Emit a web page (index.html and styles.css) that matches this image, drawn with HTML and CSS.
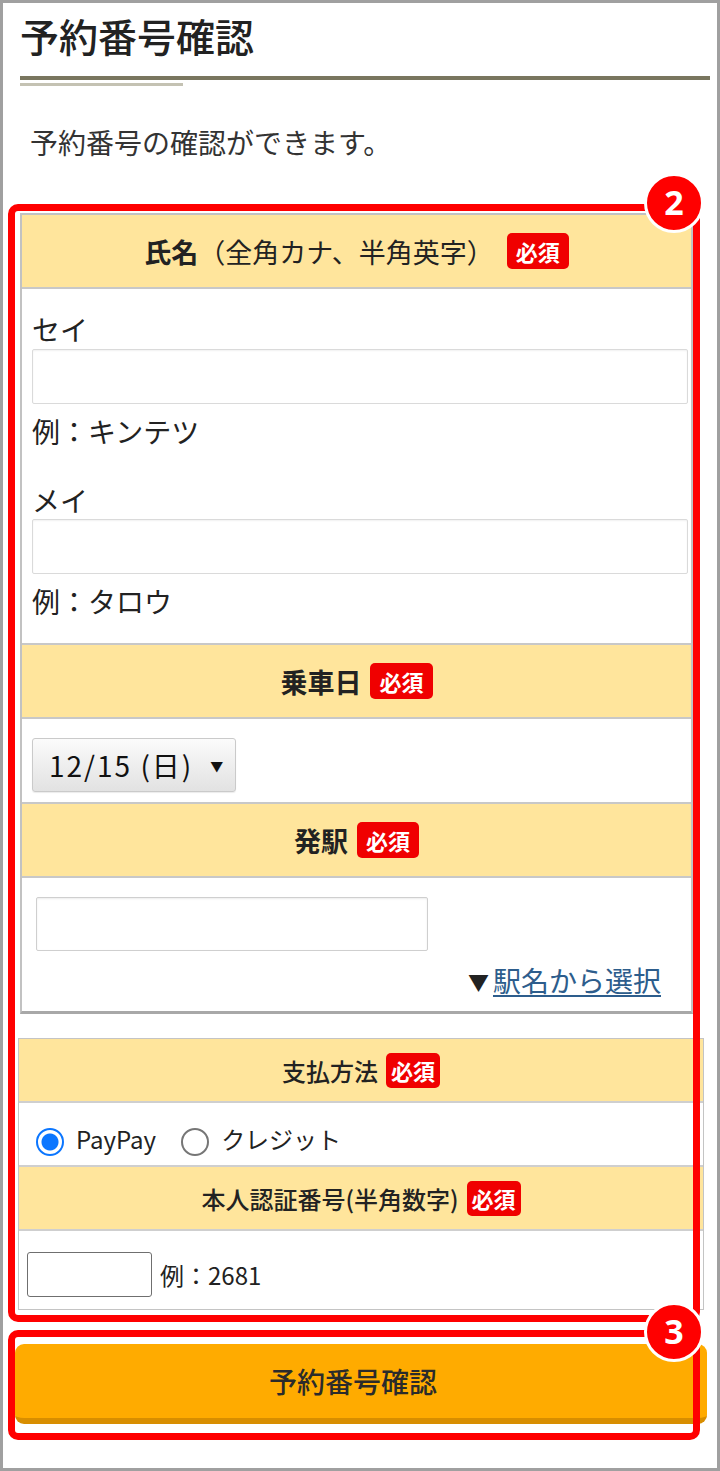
FILE: index.html
```html
<!DOCTYPE html>
<html lang="ja">
<head>
<meta charset="utf-8">
<title>予約番号確認</title>
<link rel="stylesheet" href="styles.css">
</head>
<body>
<div class="frame">
  <div class="page-head">
    <h1 class="page-title">予約番号確認</h1>
    <div class="title-rule"></div>
  </div>
  <p class="lead">予約番号の確認ができます。</p>

  <section class="form-main">
    <div class="form-head first"><strong>氏名</strong><span class="note">（全角カナ、半角英字）</span><span class="req">必須</span></div>
    <div class="form-body name-body">
      <label class="field-label">セイ</label>
      <input class="text-input" type="text">
      <p class="example">例：キンテツ</p>
      <label class="field-label gap">メイ</label>
      <input class="text-input tight" type="text">
      <p class="example">例：タロウ</p>
    </div>
    <div class="form-head"><strong>乗車日</strong><span class="req">必須</span></div>
    <div class="form-body date-body">
      <div class="select-box"><span class="select-text">12/15 (日)</span><span class="caret">▼</span></div>
    </div>
    <div class="form-head"><strong>発駅</strong><span class="req">必須</span></div>
    <div class="form-body station-body">
      <input class="station-input" type="text">
      <div class="station-link"><span class="tri">▼</span><a href="#">駅名から選択</a></div>
    </div>
  </section>

  <section class="form-sub">
    <div class="sub-head">支払方法<span class="req req-sm">必須</span></div>
    <div class="radio-row">
      <label class="radio"><input type="radio" name="pay" checked><span>PayPay</span></label>
      <label class="radio"><input type="radio" name="pay"><span>クレジット</span></label>
    </div>
    <div class="sub-head">本人認証番号(半角数字)<span class="req req-sm">必須</span></div>
    <div class="pin-row">
      <input class="pin-input" type="text">
      <span class="pin-example">例：2681</span>
    </div>
  </section>

  <button class="submit" type="button">予約番号確認</button>

  <div class="mark mark-form"></div>
  <div class="mark mark-submit"></div>
  <span class="step step-2">2</span>
  <span class="step step-3">3</span>
</div>
</body>
</html>
```

FILE: styles.css
```css
html, body {
  margin: 0;
  padding: 0;
  background: #fff;
}
body {
  font-family: "Noto Sans CJK JP", "Noto Sans", sans-serif;
  color: #222;
}
.frame {
  position: relative;
  width: 720px;
  height: 1471px;
  box-sizing: border-box;
  border: 3px solid #a0a0a0;
  background: #fff;
  padding-top: 13px;
  overflow: hidden;
}

/* heading */
.page-head {
  margin: 0 7px 0 17px;
}
.page-title {
  margin: 0;
  font-size: 39px;
  line-height: 39px;
  font-weight: 500;
  color: #222;
  padding-bottom: 21px;
  border-bottom: 4px solid #79765f;
}
.title-rule {
  width: 163px;
  height: 3px;
  margin-top: 3px;
  background: #c4c2b3;
}
.lead {
  margin: 42px 0 0 27px;
  font-size: 28px;
  line-height: 28px;
  color: #333;
}

/* main form box */
.form-main {
  margin: 57px 24px 0 17px;
  border: 2px solid #c2c2c2;
  border-bottom-width: 3px;
  border-bottom-color: #a8a8a8;
}
.form-head {
  display: flex;
  justify-content: center;
  align-items: center;
  box-sizing: border-box;
  height: 76px;
  background: #ffe59c;
  border-top: 2px solid #c8c8c8;
  border-bottom: 2px solid #c8c8c8;
  font-size: 27px;
  color: #222;
}
.form-head.first {
  height: 74px;
  border-top: 0;
}
.form-head strong {
  font-weight: 700;
}
.form-head .note {
  font-weight: 400;
}
.req {
  display: inline-block;
  height: 36px;
  line-height: 36px;
  padding: 0 9px;
  margin-left: 9px;
  border-radius: 5px;
  background: #f00000;
  color: #fff;
  font-size: 22px;
  font-weight: 700;
}
.form-head .note + .req {
  margin-left: 13px;
}

.form-body {
  padding: 0 3px 0 10px;
  background: #fff;
}
.name-body {
  padding-top: 23px;
  padding-bottom: 25px;
}
.field-label,
.example {
  display: block;
  margin: 0;
  font-size: 28px;
  line-height: 34px;
  color: #222;
}
.field-label {
  margin-bottom: 3px;
}
.field-label.gap {
  margin-top: 35px;
  margin-bottom: 2px;
}
.example {
  margin-top: 10px;
}
.text-input {
  display: block;
  width: 100%;
  height: 55px;
  box-sizing: border-box;
  border: 1px solid #dadada;
  border-radius: 2px;
  box-shadow: inset 0 1px 2px rgba(0, 0, 0, 0.06);
  background: #fff;
  margin: 0;
}

.date-body {
  padding-top: 19px;
  padding-bottom: 10px;
}
.select-box {
  display: flex;
  align-items: center;
  width: 204px;
  height: 54px;
  box-sizing: border-box;
  padding-left: 16px;
  border: 1px solid #cacaca;
  border-radius: 3px;
  background: linear-gradient(#fbfbfb, #e2e2e2);
  box-shadow: 0 1px 1px rgba(0, 0, 0, 0.08);
}
.select-text {
  font-size: 28px;
  letter-spacing: 2px;
  color: #111;
}
.caret {
  margin-left: 17px;
  font-size: 13px;
  color: #111;
}

.station-body {
  padding-top: 19px;
  padding-bottom: 13px;
}
.station-input {
  display: block;
  width: 392px;
  height: 54px;
  box-sizing: border-box;
  margin: 0 0 0 4px;
  border: 1px solid #cfcfcf;
  border-radius: 2px;
  box-shadow: inset 0 1px 2px rgba(0, 0, 0, 0.08);
  background: #fff;
}
.station-link {
  margin-top: 12px;
  padding-right: 27px;
  text-align: right;
  font-size: 28px;
  line-height: 34px;
}
.station-link .tri {
  font-size: 21px;
  color: #222;
  margin-right: 4px;
  vertical-align: 2px;
}
.station-link a {
  color: #2d5d8c;
  text-decoration: underline;
  text-underline-offset: 3px;
}

/* sub form box */
.form-sub {
  margin: 24px 13px 0 15px;
  border: 1px solid #c4c4c4;
  background: #fff;
}
.sub-head {
  display: flex;
  justify-content: center;
  align-items: center;
  height: 64px;
  box-sizing: border-box;
  background: #ffe59c;
  border-bottom: 2px solid #cfcfcf;
  font-size: 24px;
  font-weight: 500;
  color: #222;
}
.req-sm {
  height: 35px;
  line-height: 35px;
  padding: 0 5px;
  margin-left: 8px;
  font-size: 22px;
}
.radio-row {
  display: flex;
  align-items: center;
  height: 64px;
  box-sizing: border-box;
  padding: 8px 0 0 17px;
  border-bottom: 2px solid #cfcfcf;
}
.radio {
  display: flex;
  align-items: center;
  font-size: 24px;
  color: #222;
}
.radio + .radio {
  margin-left: 25px;
}
.radio input {
  appearance: none;
  -webkit-appearance: none;
  width: 28px;
  height: 28px;
  margin: 8px 12px 0 0;
  box-sizing: border-box;
  border: 2px solid #767676;
  border-radius: 50%;
  background: #fff;
}
.radio input:checked {
  border-color: #0b76ff;
  background: radial-gradient(circle, #0b76ff 0 8px, #fff 9px);
}
.pin-row {
  display: flex;
  align-items: center;
  height: 78px;
  box-sizing: border-box;
  padding: 21px 0 12px 8px;
}
.pin-input {
  width: 125px;
  height: 45px;
  box-sizing: border-box;
  margin: 0 8px 0 0;
  border: 1px solid #6f6f6f;
  border-radius: 3px;
  background: #fff;
}
.pin-example {
  font-size: 24px;
  color: #222;
}

/* submit button */
.submit {
  display: block;
  width: 692px;
  height: 80px;
  margin: 34px 0 0 12px;
  padding: 0 16px 0 0;
  border: 0;
  border-bottom: 6px solid #d88e00;
  border-radius: 9px;
  background: #ffab00;
  font-family: "Noto Sans CJK JP", sans-serif;
  font-size: 28px;
  font-weight: 500;
  color: #2b2b2b;
}

/* annotations */
.mark {
  position: absolute;
  box-sizing: border-box;
  border: 7px solid #ff0000;
  border-radius: 10px;
}
.mark-form {
  left: 5px;
  top: 201px;
  width: 692px;
  height: 1118px;
}
.mark-submit {
  left: 5px;
  top: 1327px;
  width: 692px;
  height: 110px;
}
.step {
  position: absolute;
  width: 60px;
  height: 60px;
  box-sizing: border-box;
  border: 3px solid #fff;
  border-radius: 50%;
  background: #ff0000;
  color: #fff;
  font-family: "Noto Sans", "Liberation Sans", sans-serif;
  font-size: 34px;
  font-weight: 700;
  line-height: 52px;
  text-align: center;
}
.step-2 {
  left: 641px;
  top: 170px;
}
.step-3 {
  left: 641px;
  top: 1299px;
}
```
